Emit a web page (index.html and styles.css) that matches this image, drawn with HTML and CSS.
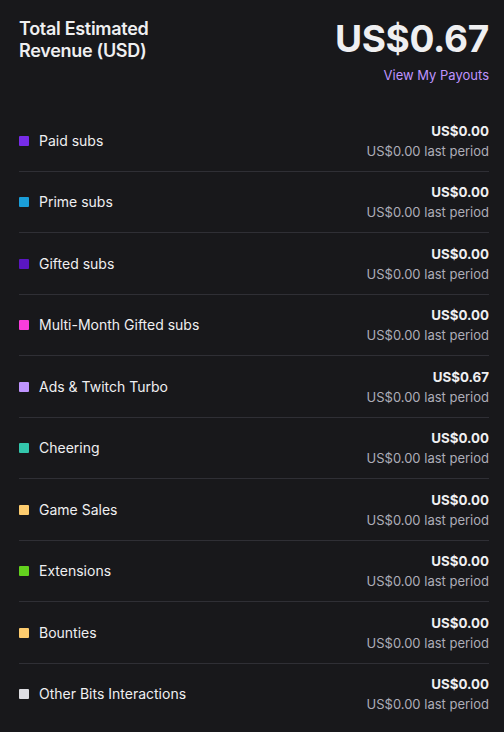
FILE: index.html
```html
<!DOCTYPE html>
<html>
<head>
<meta charset="utf-8">
<link rel="stylesheet" href="styles.css">
</head>
<body>
<div class="panel">
  <header class="head">
    <h1 class="title">Total Estimated<br>Revenue (USD)</h1>
    <div class="total">
      <div class="amount">US$0.67</div>
      <a class="link">View My Payouts</a>
    </div>
  </header>
  <ul class="rows">
    <li class="row"><span class="label"><i class="sw c1"></i>Paid subs</span><span class="vals"><b>US$0.00</b><span class="prev">US$0.00 last period</span></span></li>
    <li class="row"><span class="label"><i class="sw c2"></i>Prime subs</span><span class="vals"><b>US$0.00</b><span class="prev">US$0.00 last period</span></span></li>
    <li class="row"><span class="label"><i class="sw c3"></i>Gifted subs</span><span class="vals"><b>US$0.00</b><span class="prev">US$0.00 last period</span></span></li>
    <li class="row"><span class="label"><i class="sw c4"></i>Multi-Month Gifted subs</span><span class="vals"><b>US$0.00</b><span class="prev">US$0.00 last period</span></span></li>
    <li class="row"><span class="label"><i class="sw c5"></i>Ads &amp; Twitch Turbo</span><span class="vals"><b>US$0.67</b><span class="prev">US$0.00 last period</span></span></li>
    <li class="row"><span class="label"><i class="sw c6"></i>Cheering</span><span class="vals"><b>US$0.00</b><span class="prev">US$0.00 last period</span></span></li>
    <li class="row"><span class="label"><i class="sw c7"></i>Game Sales</span><span class="vals"><b>US$0.00</b><span class="prev">US$0.00 last period</span></span></li>
    <li class="row"><span class="label"><i class="sw c8"></i>Extensions</span><span class="vals"><b>US$0.00</b><span class="prev">US$0.00 last period</span></span></li>
    <li class="row"><span class="label"><i class="sw c7"></i>Bounties</span><span class="vals"><b>US$0.00</b><span class="prev">US$0.00 last period</span></span></li>
    <li class="row last"><span class="label"><i class="sw c9"></i>Other Bits Interactions</span><span class="vals"><b>US$0.00</b><span class="prev">US$0.00 last period</span></span></li>
  </ul>
</div>
</body>
</html>
```

FILE: styles.css
```css
html, body {
  margin: 0;
  padding: 0;
  background: #18181b;
}
body {
  font-family: Inter, "Noto Sans", sans-serif;
  color: #efeff1;
  width: 504px;
  height: 732px;
  overflow: hidden;
}
.panel {
  padding: 0 15px 0 19px;
}
.head {
  display: flex;
  justify-content: space-between;
  align-items: flex-start;
  height: 110px;
  box-sizing: border-box;
  padding-top: 18px;
}
.title {
  margin: 0;
  font-size: 18px;
  line-height: 22px;
  font-weight: 600;
  letter-spacing: -0.3px;
  color: #efeff1;
}
.total {
  display: flex;
  flex-direction: column;
  align-items: flex-end;
  margin-top: -1px;
}
.amount {
  font-size: 37px;
  line-height: 44px;
  font-weight: 700;
  letter-spacing: -0.3px;
}
.link {
  font-size: 13px;
  line-height: 18px;
  color: #bf94ff;
  margin-top: 5px;
}
.rows {
  list-style: none;
  margin: 0;
  padding: 0;
}
.row {
  display: flex;
  justify-content: space-between;
  align-items: center;
  height: 60.5px;
  border-bottom: 1px solid #2f2f35;
}
.row.last {
  border-bottom: none;
}
.label {
  display: flex;
  align-items: center;
  font-size: 14px;
  line-height: 20px;
  padding-top: 1px;
}
.sw {
  display: inline-block;
  width: 10px;
  height: 10px;
  border-radius: 1px;
  margin-right: 10px;
}
.c1 { background: #772ce8; }
.c2 { background: #1a9ed9; }
.c3 { background: #5a16c2; }
.c4 { background: #fa3ddc; }
.c5 { background: #bf94ff; }
.c6 { background: #33c6ac; }
.c7 { background: #fdcc6e; }
.c8 { background: #63d11e; }
.c9 { background: #dedee3; }
.vals {
  display: flex;
  flex-direction: column;
  align-items: flex-end;
  line-height: 20px;
  margin-top: 1px;
}
.vals b {
  font-size: 13.3px;
  font-weight: 700;
}
.prev {
  font-size: 13px;
  color: #adadb8;
}
```
